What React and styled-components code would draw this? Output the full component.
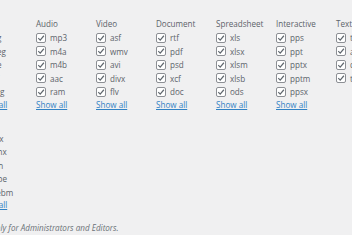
import React from "react";
import styled, { createGlobalStyle } from "styled-components";

const Global = createGlobalStyle`
  html, body { margin: 0; padding: 0; background: #f0f0f1; }
  body { font-family: "Open Sans", "Noto Sans", sans-serif; overflow: hidden; }
`;

const Page = styled.div`
  width: 400px;
  margin-left: -24px;
  padding-top: 16px;
  font-size: 8.1px;
  color: #5c636a;
`;

const Group = styled.div`
  display: flex;
  margin-bottom: ${(p) => p.$gap || 0}px;
`;

const Column = styled.div`
  width: 60px;
  flex: none;
  display: flex;
  flex-direction: column;
`;

const Heading = styled.div`
  height: 15px;
  line-height: 15px;
  white-space: nowrap;
`;

const Item = styled.label`
  display: flex;
  align-items: center;
  gap: 4px;
  height: 13.5px;
  white-space: nowrap;
`;

const Box = styled.span`
  box-sizing: border-box;
  width: 10px;
  height: 10px;
  flex: none;
  border: 1px solid #8c8f94;
  border-radius: 2px;
  background: #fff;
  display: flex;
  align-items: center;
  justify-content: center;
`;

const ShowAll = styled.a`
  display: block;
  line-height: 11px;
  color: #3182c4;
  text-decoration: underline;
  white-space: nowrap;
  cursor: pointer;
`;

const Description = styled.p`
  margin: 12px 0 0 14px;
  line-height: 12px;
  font-style: italic;
  color: #6b7177;
  white-space: nowrap;
`;

const Check = () => (
  <svg width="8" height="8" viewBox="0 0 10 10">
    <path d="M1.6 5.2 L4 7.6 L8.6 2.2" fill="none" stroke="#60676e" strokeWidth="1.5" />
  </svg>
);

const groupOne = [
  { title: "Image", items: ["jpg", "jpeg", "jpe", "gif", "png"], more: true },
  { title: "Audio", items: ["mp3", "m4a", "m4b", "aac", "ram"], more: true },
  { title: "Video", items: ["asf", "wmv", "avi", "divx", "flv"], more: true },
  { title: "Document", items: ["rtf", "pdf", "psd", "xcf", "doc"], more: true },
  { title: "Spreadsheet", items: ["xls", "xlsx", "xlsm", "xlsb", "ods"], more: true },
  { title: "Interactive", items: ["pps", "ppt", "pptx", "pptm", "ppsx"], more: true },
  { title: "Text", items: ["txt", "asc", "csv", "tsv"], more: false },
];

const groupTwo = [
  { title: "Other", items: ["ogx", "mnx", "run", "mpe", "webm"], more: true },
];

const Col = ({ col }) => (
  <Column>
    <Heading>{col.title}</Heading>
    {col.items.map((it) => (
      <Item key={it}>
        <Box>
          <Check />
        </Box>
        {it}
      </Item>
    ))}
    {col.more && <ShowAll>Show all</ShowAll>}
  </Column>
);

export default function App() {
  return (
    <>
      <Global />
      <Page>
        <Group $gap={7}>
          {groupOne.map((c) => (
            <Col key={c.title} col={c} />
          ))}
        </Group>
        <Group>
          {groupTwo.map((c) => (
            <Col key={c.title} col={c} />
          ))}
        </Group>
        <Description>Only for Administrators and Editors.</Description>
      </Page>
    </>
  );
}
